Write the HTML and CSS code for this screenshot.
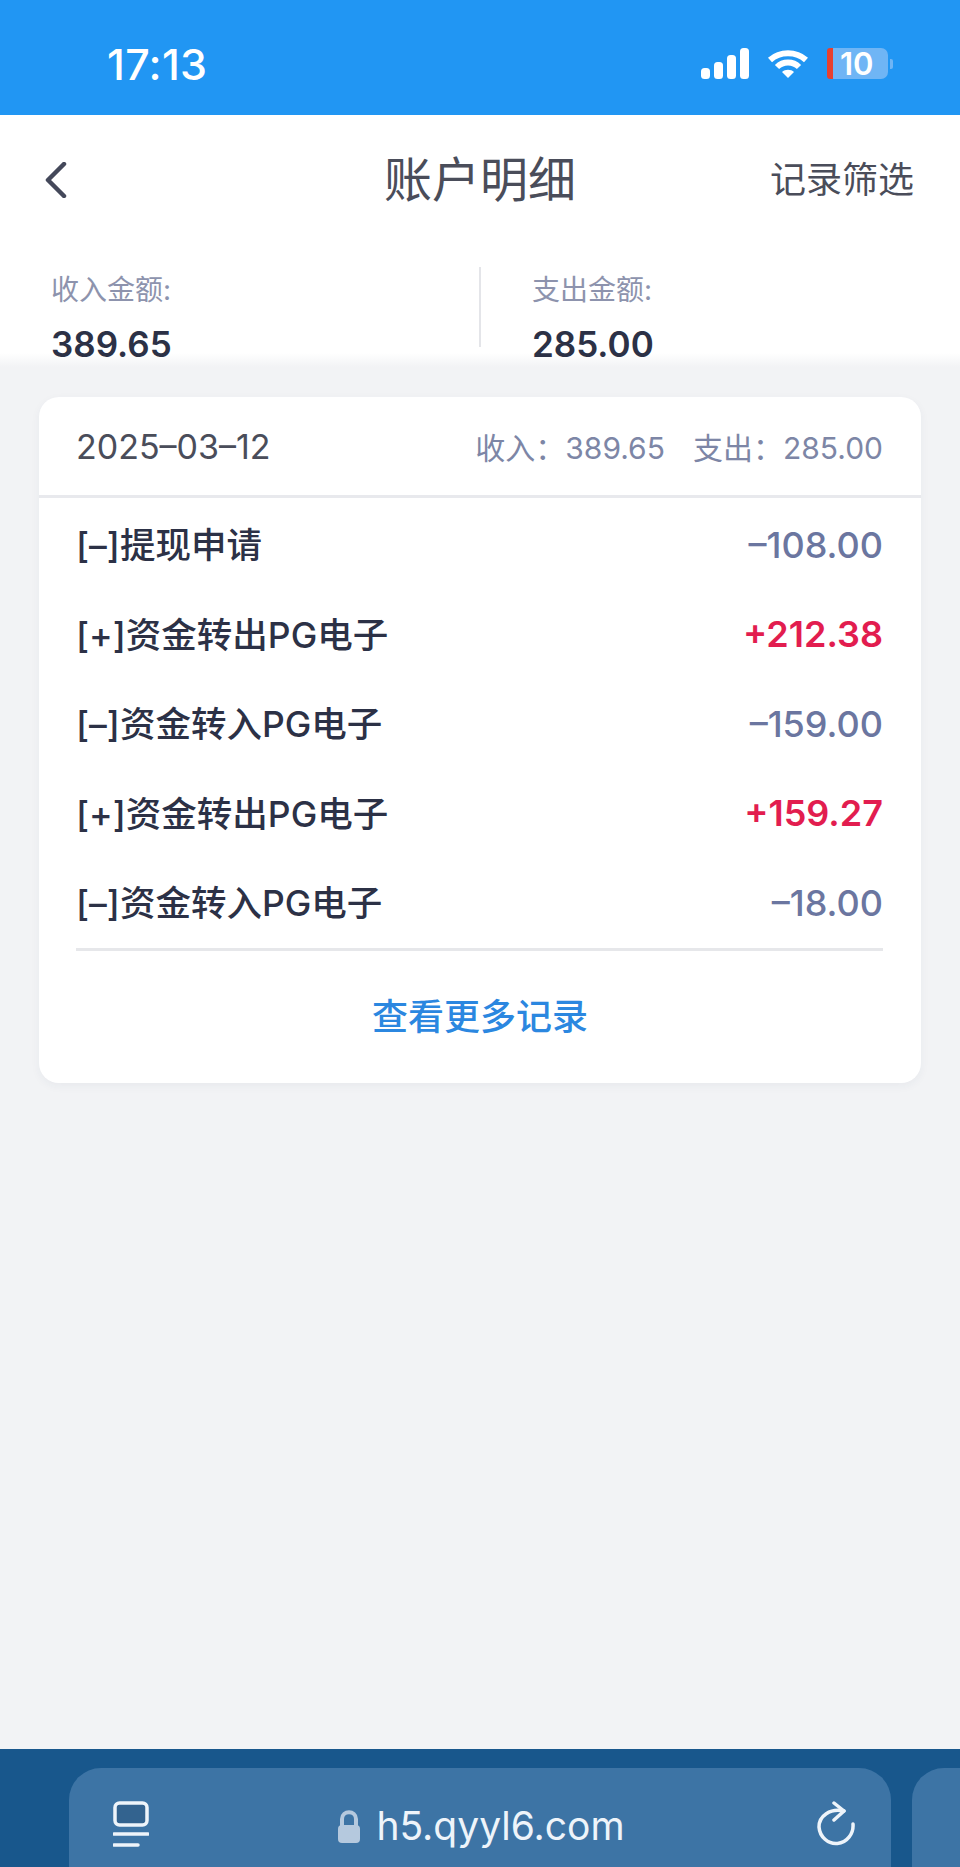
FILE: index.html
```html
<!DOCTYPE html>
<html lang="zh-CN">
<head>
  <meta charset="UTF-8">
  <title>账户明细</title>
  <link rel="stylesheet" href="styles.css">
</head>
<body>
  <div class="status-bar">
    <div class="time">17:13</div>
    <div class="status-icons">
      <svg class="signal" width="48" height="31" viewBox="0 0 48 31">
        <rect x="0" y="20" width="9" height="11" rx="3.5"/>
        <rect x="13" y="14" width="9" height="17" rx="3.5"/>
        <rect x="26" y="7" width="9" height="24" rx="3.5"/>
        <rect x="39" y="0" width="9" height="31" rx="3.5"/>
      </svg>
      <svg class="wifi" width="42" height="30" viewBox="0 0 42 30">
        <path d="M3 11 C13 2 29 2 39 11" />
        <path d="M10 18 C16 12 26 12 32 18" />
        <path class="wifi-dot" d="M15 23 C18 20 24 20 27 23 L21 29 Z" />
      </svg>
      <div class="battery">
        <span class="battery-low"></span>
        <span class="battery-num">10</span>
      </div>
      <span class="battery-nub"></span>
    </div>
  </div>

  <div class="top-panel">
    <div class="nav">
      <svg class="back" width="22" height="36" viewBox="0 0 22 36">
        <path d="M19 2 L3 18 L19 34" />
      </svg>
      <div class="nav-title">账户明细</div>
      <div class="nav-filter">记录筛选</div>
    </div>
    <div class="summary">
      <div class="summary-col">
        <div class="summary-label">收入金额:</div>
        <div class="summary-value">389.65</div>
      </div>
      <div class="summary-col summary-right">
        <div class="summary-label">支出金额:</div>
        <div class="summary-value">285.00</div>
      </div>
    </div>
  </div>

  <div class="content">
    <div class="card">
      <div class="card-head">
        <div class="card-date">2025–03–12</div>
        <div class="card-total">
          <span>收入：389.65</span>
          <span>支出：285.00</span>
        </div>
      </div>
      <div class="rows">
        <div class="row"><span>[–]提现申请</span><strong class="minus">–108.00</strong></div>
        <div class="row"><span>[+]资金转出PG电子</span><strong class="plus">+212.38</strong></div>
        <div class="row"><span>[–]资金转入PG电子</span><strong class="minus">–159.00</strong></div>
        <div class="row"><span>[+]资金转出PG电子</span><strong class="plus">+159.27</strong></div>
        <div class="row"><span>[–]资金转入PG电子</span><strong class="minus">–18.00</strong></div>
      </div>
      <a href="#" class="more">查看更多记录</a>
    </div>
  </div>

  <div class="browser-bar">
    <div class="address">
      <svg class="tabs-icon" width="36" height="46" viewBox="0 0 36 46">
        <rect class="tabs-screen" x="2" y="2" width="32" height="22" rx="4.5" />
        <path d="M1 33 H35" />
        <path d="M1 44 H25" />
      </svg>
      <div class="url">
        <svg class="lock" width="24" height="33" viewBox="0 0 24 33">
          <path class="lock-loop" d="M5 16 V9 C5 0 19 0 19 9 V16" />
          <rect x="1" y="15" width="22" height="18" rx="4" />
        </svg>
        <span>h5.qyyl6.com</span>
      </div>
      <svg class="reload" width="38" height="46" viewBox="0 0 38 46">
        <path d="M27 10 C13 7 2 15 2 26 A17 18 0 1 0 36 23" />
        <path d="M17 2 L27 10 L17 19" />
      </svg>
    </div>
    <div class="address-next"></div>
  </div>
</body>
</html>
```

FILE: styles.css
```css
* {
  margin: 0;
  padding: 0;
  box-sizing: border-box;
}

body {
  width: 960px;
  height: 1867px;
  overflow: hidden;
  display: flex;
  flex-direction: column;
  background-color: #f2f3f5;
  font-family: Inter, "Noto Sans CJK SC", sans-serif;
  color: #2c3146;
}

.status-bar {
  height: 115px;
  flex-shrink: 0;
  display: flex;
  justify-content: space-between;
  align-items: center;
  padding: 12px 67px 0 107px;
  background-color: #2196f3;
  color: white;
}

.time {
  font-size: 43px;
  font-weight: 500;
  line-height: 44px;
  letter-spacing: 0.3px;
}

.status-icons {
  display: flex;
  align-items: center;
}

.signal {
  fill: white;
  margin-right: 18px;
}

.wifi {
  margin-right: 18px;
}

.wifi path {
  fill: none;
  stroke: white;
  stroke-width: 6;
}

.wifi .wifi-dot {
  fill: white;
  stroke: none;
}

.battery {
  width: 61px;
  height: 31px;
  display: flex;
  align-items: center;
  background-color: #6fb5f5;
  border-radius: 7px;
}

.battery-low {
  width: 6px;
  height: 31px;
  background-color: #e8402f;
  border-radius: 3px 0 0 3px;
}

.battery-num {
  margin-left: 7px;
  font-size: 31px;
  font-weight: 600;
  line-height: 31px;
}

.battery-nub {
  width: 3px;
  height: 10px;
  margin-left: 2px;
  background-color: #6fb5f5;
  border-radius: 0 2px 2px 0;
}

.top-panel {
  height: 252px;
  flex-shrink: 0;
  background: linear-gradient(white 238px, #f2f3f5);
}

.nav {
  height: 130px;
  position: relative;
  display: flex;
  justify-content: space-between;
  align-items: center;
  padding: 0 46px 0 45px;
}

.back path {
  fill: none;
  stroke: #44485a;
  stroke-width: 4.5;
  stroke-linecap: round;
  stroke-linejoin: round;
}

.nav-title {
  position: absolute;
  left: 0;
  right: 0;
  text-align: center;
  font-size: 48px;
  line-height: 60px;
  color: #4a4d5a;
}

.nav-filter {
  font-size: 36px;
  line-height: 48px;
  color: #4a4d5a;
}

.summary {
  display: flex;
  height: 80px;
  margin-top: 22px;
}

.summary-col {
  width: 479px;
  padding: 5px 0 0 51px;
}

.summary-right {
  border-left: 2px solid #e4e5e9;
}

.summary-label {
  font-size: 28px;
  line-height: 36px;
  color: #8d93ad;
}

.summary-value {
  margin-top: 14px;
  font-size: 35px;
  font-weight: 600;
  line-height: 44px;
  color: #2c3146;
}

.content {
  flex: 1;
  padding: 30px 39px 0;
}

.card {
  height: 686px;
  background-color: white;
  border-radius: 20px;
  box-shadow: 0 3px 10px rgba(40, 50, 90, 0.05);
}

.card-head {
  height: 101px;
  display: flex;
  justify-content: space-between;
  align-items: center;
  padding: 0 38px 0 37px;
  border-bottom: 3px solid #e8e9ed;
}

.card-date {
  font-size: 34px;
  color: #4a4d5a;
}

.card-total {
  display: flex;
  gap: 28px;
  font-size: 30px;
  color: #7d86a6;
}

.rows {
  margin: 0 38px 0 37px;
  padding-bottom: 2px;
  border-bottom: 3px solid #e6e7ea;
}

.row {
  height: 89.5px;
  display: flex;
  justify-content: space-between;
  align-items: center;
  font-size: 35.5px;
  font-weight: 500;
  color: #2c3146;
}

.row strong {
  margin-top: 4px;
  font-size: 36px;
  font-weight: 500;
}

.minus {
  color: #6b76a0;
}

.row .plus {
  color: #e21d4f;
  font-weight: 600;
}

.more {
  display: block;
  margin-top: 36px;
  text-align: center;
  font-size: 36px;
  font-weight: 500;
  line-height: 60px;
  color: #2b87e0;
  text-decoration: none;
}

.browser-bar {
  height: 118px;
  flex-shrink: 0;
  display: flex;
  gap: 21px;
  padding: 19px 0 0 69px;
  overflow: hidden;
  background-color: #18578c;
}

.address {
  width: 822px;
  height: 130px;
  flex-shrink: 0;
  display: flex;
  justify-content: space-between;
  align-items: flex-start;
  padding: 33px 36px 0 44px;
  background-color: #3d74a5;
  border-radius: 32px;
}

.address-next {
  width: 200px;
  height: 130px;
  flex-shrink: 0;
  background-color: #3d74a5;
  border-radius: 32px;
}

.tabs-icon,
.reload {
  fill: none;
  stroke: #eef4fa;
  stroke-width: 3.5;
  stroke-linecap: round;
  stroke-linejoin: round;
}

.tabs-icon .tabs-screen {
  fill: #33638f;
}

.url {
  display: flex;
  align-items: center;
  gap: 15px;
  margin-top: 3px;
  margin-right: 4px;
  font-size: 39px;
  line-height: 44px;
  color: #eef4fa;
}

.lock {
  fill: #b5c9de;
}

.lock-loop {
  fill: none;
  stroke: #b5c9de;
  stroke-width: 4;
}
```
